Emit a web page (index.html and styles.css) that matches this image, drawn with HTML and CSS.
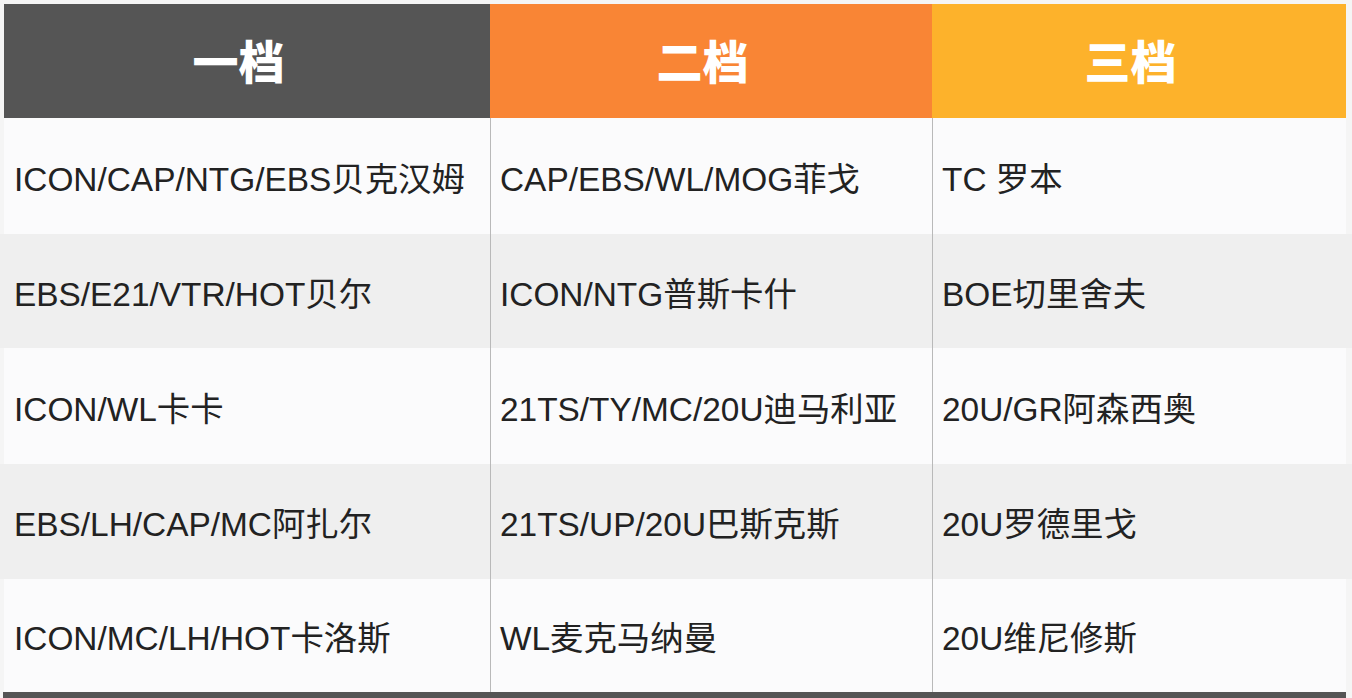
FILE: index.html
```html
<!DOCTYPE html>
<html lang="zh">
<head>
<meta charset="utf-8">
<title>档位表</title>
<link rel="stylesheet" href="styles.css">
</head>
<body>
<div class="table">
  <div class="row head">
    <div class="cell h1">一档</div>
    <div class="cell h2">二档</div>
    <div class="cell h3">三档</div>
  </div>
  <div class="row light r1">
    <div class="cell">ICON/CAP/NTG/EBS贝克汉姆</div>
    <div class="cell">CAP/EBS/WL/MOG菲戈</div>
    <div class="cell">TC 罗本</div>
  </div>
  <div class="row dark r2">
    <div class="cell">EBS/E21/VTR/HOT贝尔</div>
    <div class="cell">ICON/NTG普斯卡什</div>
    <div class="cell">BOE切里舍夫</div>
  </div>
  <div class="row light r3">
    <div class="cell">ICON/WL卡卡</div>
    <div class="cell">21TS/TY/MC/20U迪马利亚</div>
    <div class="cell">20U/GR阿森西奥</div>
  </div>
  <div class="row dark r4">
    <div class="cell">EBS/LH/CAP/MC阿扎尔</div>
    <div class="cell">21TS/UP/20U巴斯克斯</div>
    <div class="cell">20U罗德里戈</div>
  </div>
  <div class="row light r5">
    <div class="cell">ICON/MC/LH/HOT卡洛斯</div>
    <div class="cell">WL麦克马纳曼</div>
    <div class="cell">20U维尼修斯</div>
  </div>
  <div class="footbar"></div>
</div>
</body>
</html>
```
FILE: styles.css
```css
html, body {
  margin: 0;
  padding: 0;
}
body {
  width: 1352px;
  height: 698px;
  overflow: hidden;
  background: #f5f5f5;
  font-family: "Liberation Sans", Arial, "Noto Sans CJK SC", sans-serif;
  color: #222;
}
.table {
  display: flex;
  flex-direction: column;
  padding-top: 4px;
}
.row {
  display: grid;
  grid-template-columns: 486px 442px 414px;
  padding: 0 6px 0 4px;
}
.head {
  height: 114px;
}
.head .cell {
  display: flex;
  align-items: center;
  justify-content: center;
  color: #fff;
  font-family: "Noto Sans CJK SC", sans-serif;
  font-weight: 900;
  font-size: 46px;
  padding-right: 17px;
  padding-bottom: 4px;
}
.h1 { background: #555555; }
.h2 { background: #f98535; }
.h3 { background: #fdb22b; }

.r1 { height: 116px; }
.r2 { height: 114px; }
.r3 { height: 116px; }
.r4 { height: 115px; }
.r5 { height: 113px; }

.light .cell {
  background: #fbfbfc;
}
.dark {
  background: #efefef;
}
.row:not(.head) .cell {
  display: flex;
  align-items: center;
  padding-left: 10px;
  font-size: 33.4px;
  color: #222;
  white-space: nowrap;
}
.row:not(.head) .cell + .cell {
  border-left: 1px solid #b9b9b9;
  padding-left: 9px;
}
.footbar {
  height: 6px;
  margin: 0 6px 0 3px;
  background: #555555;
}
```
